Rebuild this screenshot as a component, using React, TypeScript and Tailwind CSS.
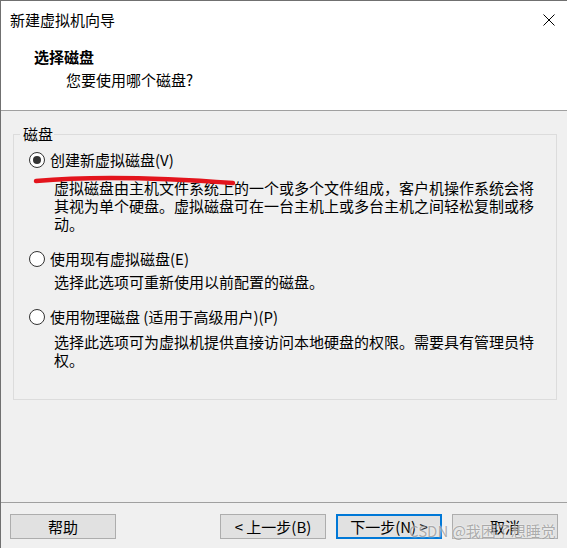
import React, { useState } from 'react';

type DiskOption = {
  id: string;
  label: string;
  desc: string;
  rowClass: string;
  descClass: string;
};

const options: DiskOption[] = [
  {
    id: 'new',
    label: '创建新虚拟磁盘(V)',
    desc: '虚拟磁盘由主机文件系统上的一个或多个文件组成，客户机操作系统会将其视为单个硬盘。虚拟磁盘可在一台主机上或多台主机之间轻松复制或移动。',
    rowClass: 'mt-[6px]',
    descClass: 'mt-[9px]',
  },
  {
    id: 'existing',
    label: '使用现有虚拟磁盘(E)',
    desc: '选择此选项可重新使用以前配置的磁盘。',
    rowClass: 'mt-[16px]',
    descClass: 'mt-[4px]',
  },
  {
    id: 'physical',
    label: '使用物理磁盘 (适用于高级用户)(P)',
    desc: '选择此选项可为虚拟机提供直接访问本地硬盘的权限。需要具有管理员特权。',
    rowClass: 'mt-[16px]',
    descClass: 'mt-[6px]',
  },
];

const Radio: React.FC<{ checked: boolean }> = ({ checked }) => (
  <span className="w-[16px] h-[16px] rounded-full border border-[#333333] bg-white flex items-center justify-center shrink-0">
    {checked && <span className="w-[8px] h-[8px] rounded-full bg-[#333333]"></span>}
  </span>
);

const WizardButton: React.FC<{ label: string; primary?: boolean }> = ({ label, primary }) => (
  <button
    className={
      primary
        ? 'w-[106px] h-[25px] bg-[#e1e1e1] border-2 border-[#0078d7] text-[15px] leading-[20px] text-black flex items-center justify-center'
        : 'w-[106px] h-[25px] bg-[#e1e1e1] border border-[#adadad] text-[15px] leading-[20px] text-black flex items-center justify-center'
    }
  >
    {label}
  </button>
);

export default function App() {
  const [selected, setSelected] = useState('new');

  return (
    <div className="relative w-[567px] h-[548px] overflow-hidden bg-[#f0f0f0] border-l border-t border-[#707070] flex flex-col font-['Noto_Sans_CJK_SC','Microsoft_YaHei',sans-serif] text-black select-none">
      {/* header */}
      <div className="h-[110px] shrink-0 bg-white border-b border-[#a0a0a0]">
        <div className="h-[38px] flex items-center justify-between pl-[9px] pr-[12px]">
          <span className="text-[15px] leading-[20px]">新建虚拟机向导</span>
          <svg width="12" height="12" viewBox="0 0 12 12" className="text-black">
            <path d="M0.5 0.5 L11.5 11.5 M11.5 0.5 L0.5 11.5" stroke="currentColor" strokeWidth="1" fill="none" />
          </svg>
        </div>
        <div className="mt-[8px] pl-[33px] text-[15px] leading-[20px] font-bold">选择磁盘</div>
        <div className="mt-[3px] pl-[65px] text-[15px] leading-[20px]">您要使用哪个磁盘?</div>
      </div>

      {/* body */}
      <div className="flex-1 pt-[23px] pl-[12px]">
        <div className="w-[544px] h-[266px] border border-[#dcdcdc]">
          <div className="-mt-[11px] ml-[6px] px-[3px] pr-[1px] w-fit bg-[#f0f0f0] text-[15px] leading-[20px]">磁盘</div>
          {options.map((o) => (
            <div key={o.id}>
              <div
                className={`${o.rowClass} flex items-center h-[20px] pl-[15px] cursor-default`}
                onClick={() => setSelected(o.id)}
              >
                <Radio checked={selected === o.id} />
                <span className="ml-[5px] text-[15px] leading-[20px] whitespace-nowrap">{o.label}</span>
              </div>
              <p className={`${o.descClass} ml-[40px] w-[482px] text-[15px] leading-[18px]`}>{o.desc}</p>
            </div>
          ))}
        </div>
      </div>

      {/* footer */}
      <div className="h-[46px] shrink-0 border-t border-[#a0a0a0] pt-[11px] pl-[9px] pr-[9px] flex items-start">
        <WizardButton label="帮助" />
        <div className="flex-1"></div>
        <div className="flex gap-[10px]">
          <WizardButton label="< 上一步(B)" />
          <WizardButton label="下一步(N) >" primary />
          <WizardButton label="取消" />
        </div>
      </div>

      {/* red pen mark over the first option */}
      <svg className="absolute left-0 top-0 pointer-events-none" width="567" height="548" viewBox="0 0 567 548">
        <path d="M35 180 Q 110 173 232 182" stroke="#e3141c" strokeWidth="4.5" strokeLinecap="round" fill="none" />
      </svg>

      {/* watermark */}
      <span className="absolute left-[408px] top-[520px] text-[15px] leading-[20px] text-[#7a7a7a]/60 [text-shadow:0_0_2px_#ffffff] pointer-events-none whitespace-nowrap">
        CSDN @我困了想睡觉
      </span>
    </div>
  );
}
